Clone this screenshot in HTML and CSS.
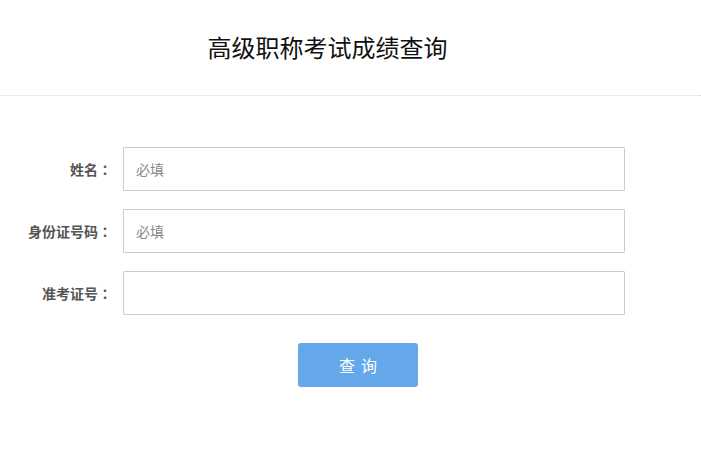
FILE: index.html
```html
<!DOCTYPE html>
<html lang="zh-CN">
<head>
<meta charset="utf-8">
<title>高级职称考试成绩查询</title>
<link rel="stylesheet" href="styles.css">
</head>
<body>
<header class="header">
  <h1 class="title">高级职称考试成绩查询</h1>
</header>
<main class="form">
  <div class="row">
    <label class="label" for="name">姓名<span class="colon" lang="ja">：</span></label>
    <input class="field" id="name" type="text" placeholder="必填">
  </div>
  <div class="row">
    <label class="label" for="idno">身份证号码<span class="colon" lang="ja">：</span></label>
    <input class="field" id="idno" type="text" placeholder="必填">
  </div>
  <div class="row">
    <label class="label" for="exno">准考证号<span class="colon" lang="ja">：</span></label>
    <input class="field" id="exno" type="text">
  </div>
  <div class="actions">
    <button class="btn" type="button">查询</button>
  </div>
</main>
</body>
</html>
```
FILE: styles.css
```css
html, body {
  margin: 0;
  padding: 0;
  background: #fff;
  font-family: "Microsoft YaHei", "Noto Sans CJK SC", "Noto Sans", sans-serif;
}
.header {
  height: 96px;
  border-bottom: 1px dotted #d6d6d6;
  box-sizing: border-box;
  display: flex;
  justify-content: center;
  padding-right: 46px;
}
.title {
  margin: 0;
  padding-top: 31px;
  font-size: 24px;
  line-height: 32px;
  font-weight: normal;
  color: #111;
}
.form {
  padding-top: 51px;
  display: flex;
  flex-direction: column;
  gap: 18px;
}
.row {
  display: flex;
  align-items: center;
}
.label {
  width: 112px;
  margin-right: 11px;
  text-align: right;
  font-size: 14px;
  font-weight: bold;
  color: #555;
  line-height: 20px;
}
.colon {
  font-family: "Noto Sans CJK JP", "Noto Sans CJK SC", sans-serif;
}
.field {
  width: 502px;
  height: 44px;
  box-sizing: border-box;
  border: 1px solid #ccc;
  border-radius: 1px;
  padding: 0 12px;
  font-size: 14px;
  font-family: inherit;
  color: #333;
  outline: none;
}
.field::placeholder {
  color: #888;
}
.actions {
  padding-left: 298px;
  padding-top: 10px;
}
.btn {
  width: 120px;
  height: 44px;
  border: none;
  border-radius: 3px;
  background: #64a8ea;
  color: #fff;
  font-family: inherit;
  font-size: 16px;
  letter-spacing: 6px;
  text-indent: 6px;
  cursor: pointer;
}
```
